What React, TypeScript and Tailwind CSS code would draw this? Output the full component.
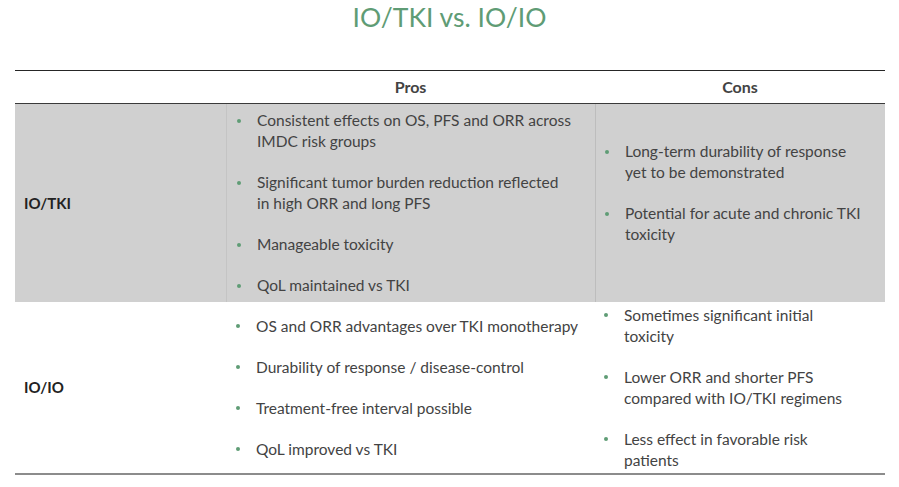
const green = "#5f9c75";

type Item = string[];

const rows: { label: string; pros: Item[]; cons: Item[]; gray: boolean }[] = [
  {
    label: "IO/TKI",
    gray: true,
    pros: [
      ["Consistent effects on OS, PFS and ORR across", "IMDC risk groups"],
      ["Significant tumor burden reduction reflected", "in high ORR and long PFS"],
      ["Manageable toxicity"],
      ["QoL maintained vs TKI"],
    ],
    cons: [
      ["Long-term durability of response", "yet to be demonstrated"],
      ["Potential for acute and chronic TKI", "toxicity"],
    ],
  },
  {
    label: "IO/IO",
    gray: false,
    pros: [
      ["OS and ORR advantages over TKI monotherapy"],
      ["Durability of response / disease-control"],
      ["Treatment-free interval possible"],
      ["QoL improved vs TKI"],
    ],
    cons: [
      ["Sometimes significant initial", "toxicity"],
      ["Lower ORR and shorter PFS", "compared with IO/TKI regimens"],
      ["Less effect in favorable risk", "patients"],
    ],
  },
];

function Bullets({ items }: { items: Item[] }) {
  return (
    <ul className="flex flex-col gap-[20px]">
      {items.map((lines, i) => (
        <li key={i} className="flex">
          <span className="flex h-[21px] w-[20px] shrink-0 items-center">
            <span className="h-[4px] w-[4px] rounded-full" style={{ backgroundColor: green }} />
          </span>
          <span className="whitespace-nowrap">
            {lines.map((l, j) => (
              <span key={j} className="block">
                {l}
              </span>
            ))}
          </span>
        </li>
      ))}
    </ul>
  );
}

export default function App() {
  return (
    <div className="h-[487px] w-[899px] overflow-hidden bg-white font-['Lato',sans-serif] text-[#434343]">
      <h1 className="text-center text-[26.5px] leading-[34px] text-[#5f9c75]">
        IO/TKI vs. IO/IO
      </h1>
      <div className="ml-[15px] mt-[36px] w-[870px] border-t-[1.5px] border-[#262626]">
        <div className="grid h-[33px] grid-cols-[211px_369px_290px] items-center border-b border-[#3a3a3a] text-[16px] font-bold">
          <div />
          <div className="text-center">Pros</div>
          <div className="text-center">Cons</div>
        </div>
        {rows.map((r) => (
          <div
            key={r.label}
            className={
              r.gray
                ? "grid h-[198px] grid-cols-[211px_369px_290px] bg-[#d0d0d0] text-[15.5px] leading-[21px]"
                : "grid h-[173px] grid-cols-[211px_369px_290px] border-b-2 border-[#8c8c8c] text-[15.5px] leading-[21px]"
            }
          >
            <div className="flex items-center pl-[9px] text-[15px] font-bold text-[#222]">{r.label}</div>
            <div
              className={
                r.gray
                  ? "flex items-center border-l border-[#c4c4c4] pl-[10px]"
                  : "flex items-center pl-[10px]"
              }
            >
              <Bullets items={r.pros} />
            </div>
            <div
              className={
                r.gray
                  ? "flex items-center border-l border-[#bdbdbd] pb-[20px] pl-[9px]"
                  : "flex items-center pl-[9px]"
              }
            >
              <Bullets items={r.cons} />
            </div>
          </div>
        ))}
      </div>
    </div>
  );
}
